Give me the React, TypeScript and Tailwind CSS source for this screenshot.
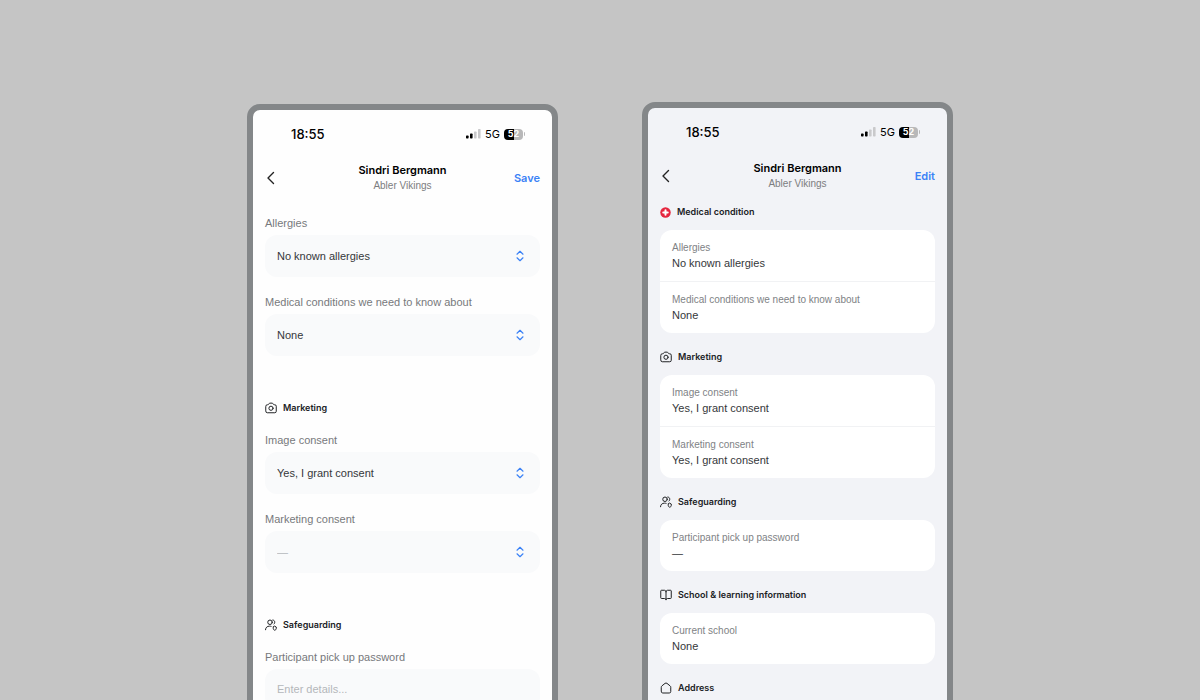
import { ReactNode, useId } from "react";

const iconProps = {
  viewBox: "0 0 24 24",
  fill: "none",
  stroke: "currentColor",
  strokeWidth: 2,
  strokeLinecap: "round",
  strokeLinejoin: "round",
  className: "size-3 shrink-0",
} as const;

function CameraIcon() {
  return (
    <svg {...iconProps}>
      <path d="M1.5 8.5a3 3 0 0 1 3-3h1.2c.8 0 1.300-.4 1.700-1.100l.5-.9c.4-.8 1-1.200 1.900-1.200h4.400c.9 0 1.500.4 1.900 1.200l.5.9c.4.7.9 1.100 1.700 1.100h1.200a3 3 0 0 1 3 3v10a3 3 0 0 1-3 3h-15a3 3 0 0 1-3-3z" />
      <circle cx="12" cy="12.5" r="4.2" />
    </svg>
  );
}

function PeopleIcon() {
  return (
    <svg {...iconProps}>
      <circle cx="10" cy="6.5" r="4.5" />
      <path d="M15.5 2c2.5 0 4 2 4 4.500 0 1.500-.5 2.800-1.500 3.600" />
      <path d="M1 21.500c.3-4.600 3.300-7.200 8-7.200 1.200 0 2.200.1 3.200.4" />
      <path d="m19.500 14.500 3 1.500v3.200c0 1.600-1.300 2.600-3 3.300-1.700-.7-3-1.700-3-3.300V16z" />
    </svg>
  );
}

function BookIcon() {
  return (
    <svg {...iconProps}>
      <path d="M12 5.500v16M12 5.500c0-1.700-1.300-3-3-3H3a1.500 1.500 0 0 0-1.500 1.500v13.500A1.500 1.500 0 0 0 3 19h6c1.700 0 3 1 3 2.500 0-1.500 1.300-2.500 3-2.500h6a1.500 1.500 0 0 0 1.500-1.500V4A1.500 1.500 0 0 0 21 2.500h-6c-1.700 0-3 1.300-3 3z" />
    </svg>
  );
}

function HomeIcon() {
  return (
    <svg {...iconProps}>
      <path d="M2.500 10.500c0-1.200.4-2 1.300-2.700l6.200-5a3.200 3.200 0 0 1 4 0l6.200 5c.9.7 1.300 1.500 1.300 2.700V19a3 3 0 0 1-3 3h-13a3 3 0 0 1-3-3z" />
    </svg>
  );
}

function MedicalIcon() {
  return (
    <svg viewBox="0 0 22 22" className="size-[11px] shrink-0">
      <circle cx="11" cy="11" r="10.5" fill="#e5263f" />
      <path d="M11 6.500v9M6.500 11h9" stroke="#fff" strokeWidth="4" strokeLinecap="round" />
    </svg>
  );
}

function StatusBar() {
  return (
    <div className="flex h-12 items-center justify-between pr-[27px] pl-[38px] font-[Inter,sans-serif]">
      <span className="text-[13px] leading-4 font-medium">18:55</span>
      <div className="flex items-center gap-1">
        <svg viewBox="0 0 15 10" className="h-[10px] w-[15px]">
          <rect x="0" y="6.5" width="2.6" height="3" rx=".7" />
          <rect x="4" y="4.5" width="2.6" height="5" rx=".7" />
          <rect x="8" y="2.5" width="2.6" height="7" rx=".7" fill="#c9c9cb" />
          <rect x="12" y="0" width="2.6" height="9.5" rx=".7" fill="#c9c9cb" />
        </svg>
        <span className="text-[11px] leading-4">5G</span>
        <div className="flex items-center gap-px">
          <span className="flex h-[11px] w-[19px] items-center justify-center rounded-[4px] bg-linear-to-r from-black from-52% to-[#b8b8b9] to-52% text-[9px] font-bold text-white">
            52
          </span>
          <span className="h-1 w-px rounded-r-full bg-[#b8b8b9]" />
        </div>
      </div>
    </div>
  );
}

function Header({ action }: { action: string }) {
  return (
    <header className="grid h-10 grid-cols-[1fr_auto_1fr] items-center px-3">
      <button aria-label="Back" className="justify-self-start">
        <svg viewBox="0 0 12 14" className="h-[14px] w-3" fill="none" stroke="#222" strokeWidth="1.4" strokeLinecap="round" strokeLinejoin="round">
          <path d="M8.500 1.500 3 7l5.500 5.500" />
        </svg>
      </button>
      <div className="text-center">
        <h1 className="font-[Inter,sans-serif] text-[11px] leading-4 font-semibold">Sindri Bergmann</h1>
        <p className="text-[10px] leading-4 text-[#7c7d80]">Abler Vikings</p>
      </div>
      <button className="justify-self-end font-[Inter,sans-serif] text-[11px] leading-4 font-semibold text-[#3b82f6]">
        {action}
      </button>
    </header>
  );
}

function Phone({ action, className, children }: { action: string; className: string; children: ReactNode }) {
  return (
    <section className={`min-h-[720px] w-full max-w-[311px] rounded-t-[13px] border-6 border-[#848789] ${className}`}>
      <StatusBar />
      <Header action={action} />
      {children}
    </section>
  );
}

function SectionTitle({ icon, children }: { icon: ReactNode; children: ReactNode }) {
  return (
    <h2 className="flex items-center gap-[6px] font-[Inter,sans-serif] text-[9px] leading-4 font-semibold text-[#202225]">
      {icon}
      {children}
    </h2>
  );
}

function SelectField({ label, value }: { label: string; value: string }) {
  const id = useId();
  const empty = value === "—";

  return (
    <div className="flex flex-col gap-1">
      <label htmlFor={id} className="text-[11px] leading-4 text-[#77797c]">
        {label}
      </label>
      <div className="relative">
        <select
          id={id}
          className={`h-[42px] w-full appearance-none rounded-xl bg-[#f9fafb] px-3 text-[11px] ${empty ? "text-[#b4b7ba]" : "text-[#35373a]"}`}
        >
          <option>{value}</option>
        </select>
        <svg viewBox="0 0 8 12" className="pointer-events-none absolute top-1/2 right-4 h-3 w-2 -translate-y-1/2" fill="none" stroke="#3b82f6" strokeWidth="1.2" strokeLinecap="round" strokeLinejoin="round">
          <path d="M1 4.200 4 1.300l3 2.900M1 7.800l3 2.900 3-2.900" />
        </svg>
      </div>
    </div>
  );
}

function TextField({ label, placeholder }: { label: string; placeholder: string }) {
  const id = useId();

  return (
    <div className="flex flex-col gap-1">
      <label htmlFor={id} className="text-[11px] leading-4 text-[#77797c]">
        {label}
      </label>
      <input
        id={id}
        placeholder={placeholder}
        className="h-10 w-full rounded-xl bg-[#f9fafb] px-3 text-[11px] placeholder:text-[#b4b7ba]"
      />
    </div>
  );
}

function EditForm() {
  return (
    <form className="flex flex-col gap-11 px-3 pt-[17px]">
      <div className="flex flex-col gap-[17px]">
        <SelectField label="Allergies" value="No known allergies" />
        <SelectField label="Medical conditions we need to know about" value="None" />
      </div>
      <div className="flex flex-col gap-4">
        <SectionTitle icon={<CameraIcon />}>Marketing</SectionTitle>
        <div className="flex flex-col gap-[17px]">
          <SelectField label="Image consent" value="Yes, I grant consent" />
          <SelectField label="Marketing consent" value="—" />
        </div>
      </div>
      <div className="flex flex-col gap-4">
        <SectionTitle icon={<PeopleIcon />}>Safeguarding</SectionTitle>
        <TextField label="Participant pick up password" placeholder="Enter details..." />
      </div>
    </form>
  );
}

type Group = { title: string; icon: ReactNode; rows: [string, string][] };

const groups: Group[] = [
  {
    title: "Medical condition",
    icon: <MedicalIcon />,
    rows: [
      ["Allergies", "No known allergies"],
      ["Medical conditions we need to know about", "None"],
    ],
  },
  {
    title: "Marketing",
    icon: <CameraIcon />,
    rows: [
      ["Image consent", "Yes, I grant consent"],
      ["Marketing consent", "Yes, I grant consent"],
    ],
  },
  { title: "Safeguarding", icon: <PeopleIcon />, rows: [["Participant pick up password", "—"]] },
  { title: "School & learning information", icon: <BookIcon />, rows: [["Current school", "None"]] },
  { title: "Address", icon: <HomeIcon />, rows: [] },
];

function Summary() {
  return (
    <div className="flex flex-col gap-4 px-3 pt-2">
      {groups.map((group) => (
        <div key={group.title} className="flex flex-col gap-[10px]">
          <SectionTitle icon={group.icon}>{group.title}</SectionTitle>
          {group.rows.length > 0 && (
            <dl className="divide-y divide-[#f1f2f4] rounded-xl bg-white">
              {group.rows.map(([label, value]) => (
                <div key={label} className="px-3 pt-[11px] pb-[10px]">
                  <dt className="text-[10px] leading-[14px] text-[#808285]">{label}</dt>
                  <dd className="text-[11px] leading-4 text-[#35373a]">{value}</dd>
                </div>
              ))}
            </dl>
          )}
        </div>
      ))}
    </div>
  );
}

function App() {
  return (
    <main className="flex h-screen items-start justify-center gap-[84px] overflow-hidden bg-[#c5c5c5] font-['Liberation_Sans',sans-serif] text-black">
      <Phone action="Save" className="mt-[104px] bg-[#fefefe]">
        <EditForm />
      </Phone>
      <Phone action="Edit" className="mt-[102px] bg-[#f2f3f7]">
        <Summary />
      </Phone>
    </main>
  );
}

export default App;
